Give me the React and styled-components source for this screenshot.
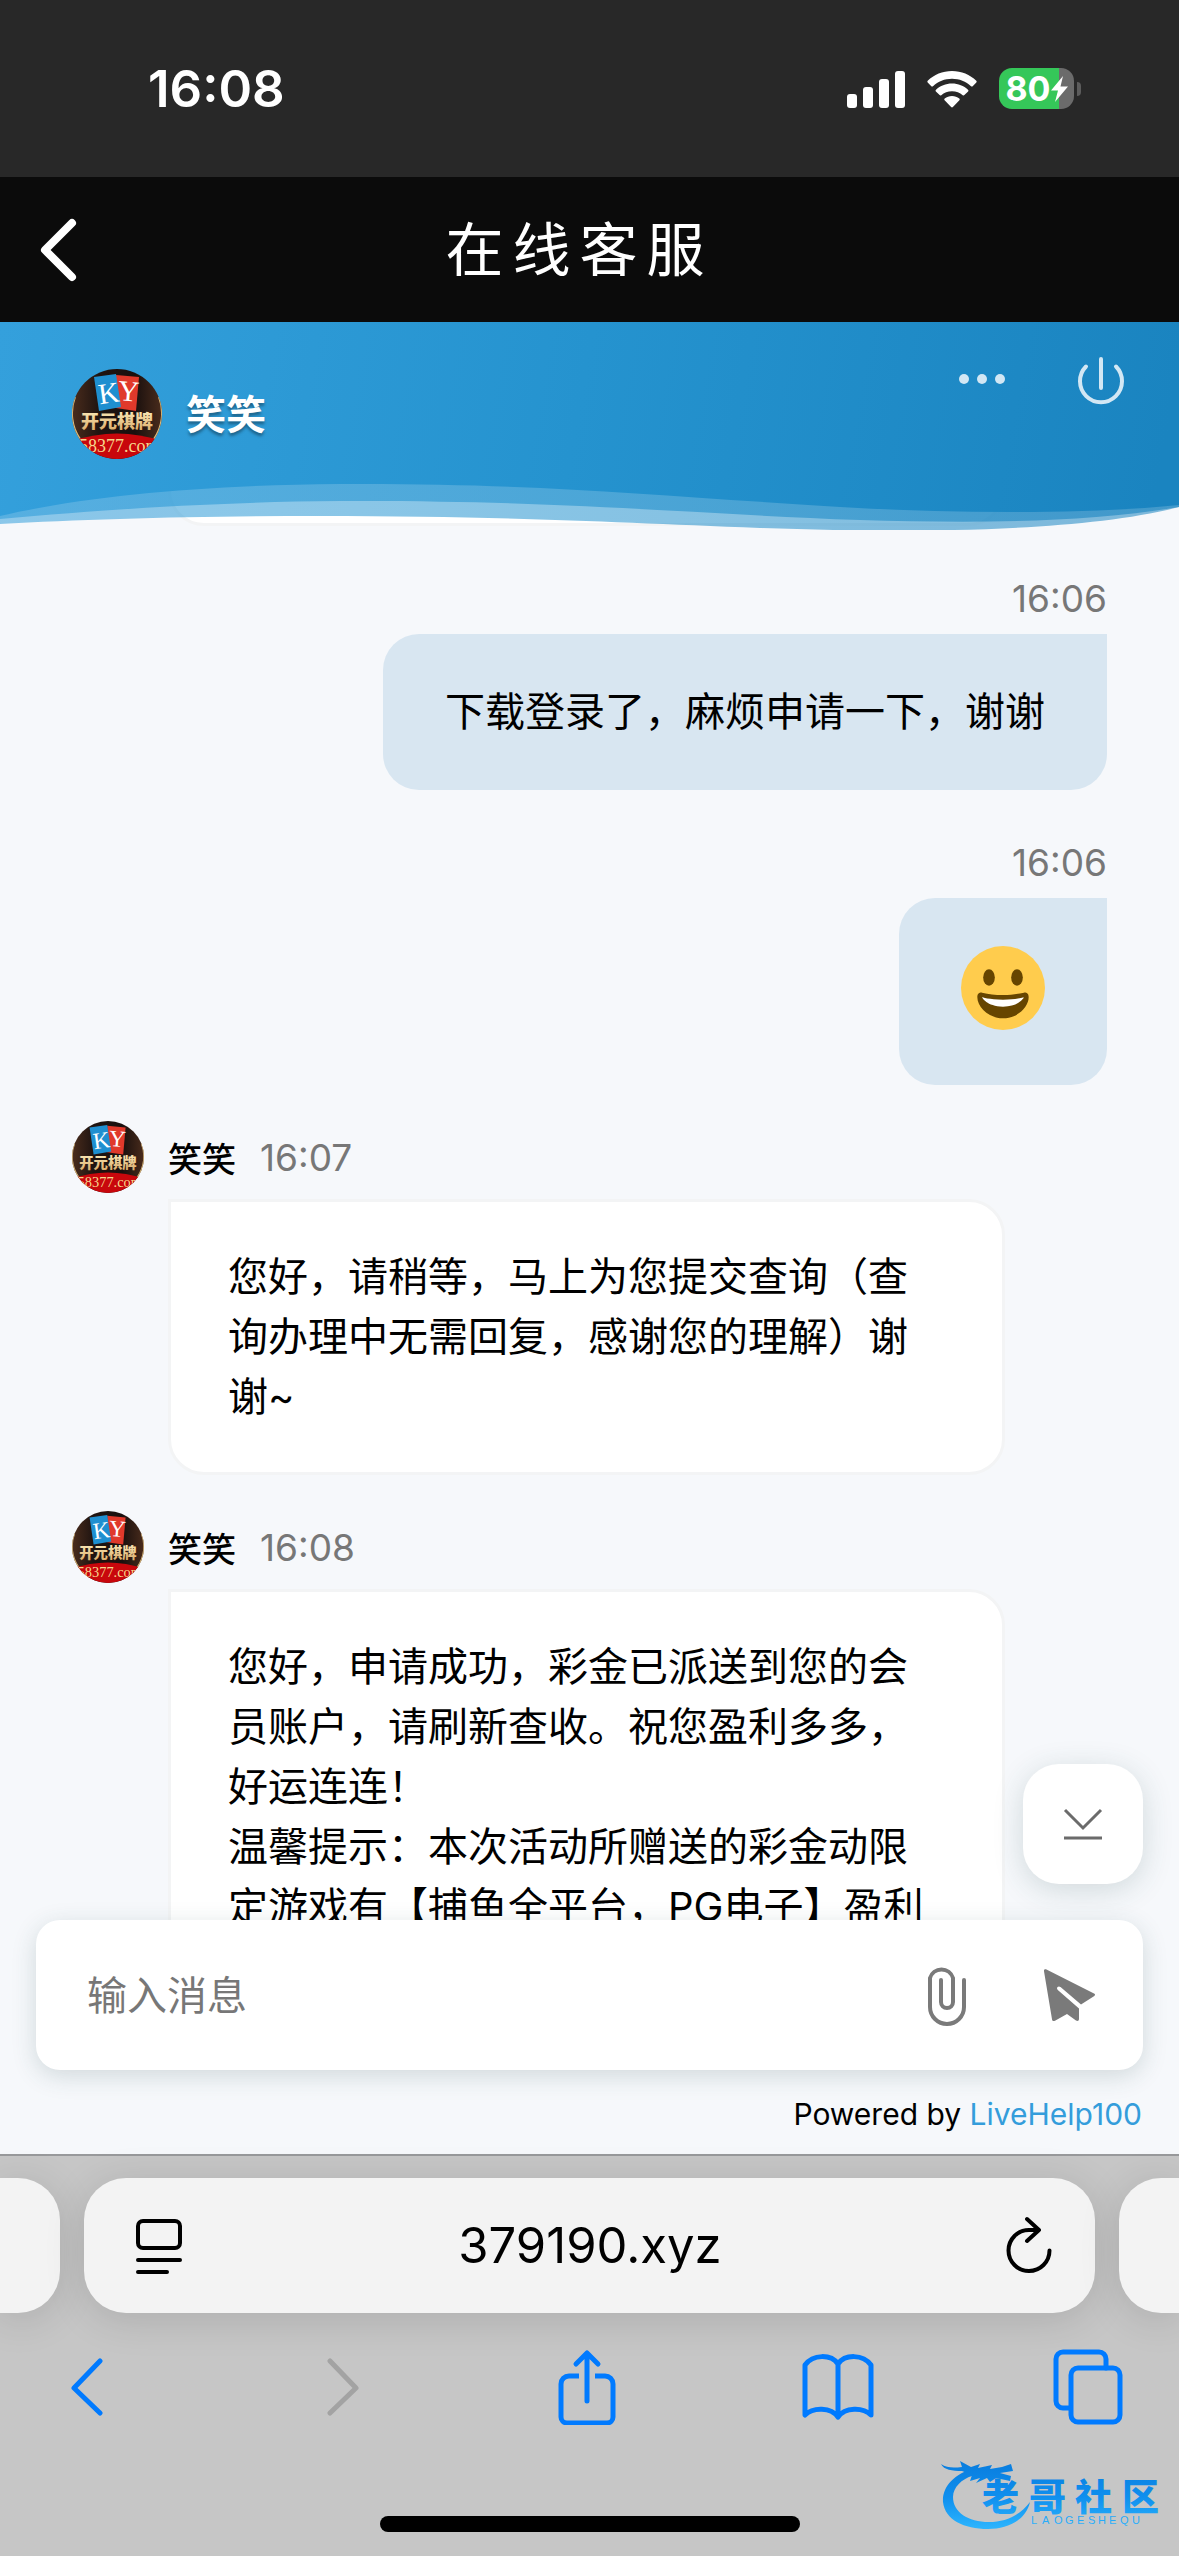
import React from "react";
import styled, { createGlobalStyle } from "styled-components";

const GlobalStyle = createGlobalStyle`
  * {
    box-sizing: border-box;
  }
  body {
    margin: 0;
    font-family: Inter, "Noto Sans CJK SC", sans-serif;
    color: #000;
  }
  button {
    display: flex;
    align-items: center;
    justify-content: center;
    padding: 0;
    border: 0;
    background: none;
    cursor: pointer;
  }
  svg {
    display: block;
    flex: none;
  }
`;

const history = [
  { id: 1, mine: true, time: "16:06", text: "下载登录了，麻烦申请一下，谢谢" },
  { id: 2, mine: true, time: "16:06", emoji: true },
  {
    id: 3,
    name: "笑笑",
    time: "16:07",
    text: "您好，请稍等，马上为您提交查询（查\n询办理中无需回复，感谢您的理解）谢\n谢~",
  },
  {
    id: 4,
    name: "笑笑",
    time: "16:08",
    text: "您好，申请成功，彩金已派送到您的会\n员账户，请刷新查收。祝您盈利多多，\n好运连连！\n温馨提示：本次活动所赠送的彩金动限\n定游戏有【捕鱼全平台，PG电子】盈利",
  },
];

const Avatar = ({ size }) => (
  <svg width={size} height={size} viewBox="0 0 90 90" role="img" aria-label="开元棋牌">
    <defs>
      <clipPath id={`face${size}`}>
        <circle cx="45" cy="45" r="45" />
      </clipPath>
      <linearGradient id={`gold${size}`} x1="0" y1="0" x2="0" y2="1">
        <stop offset="0" stopColor="#fff3c4" />
        <stop offset="1" stopColor="#d9a763" />
      </linearGradient>
      <linearGradient id={`wood${size}`} x1="0" y1="0" x2="1" y2="0">
        <stop offset="0" stopColor="#4a2c1c" />
        <stop offset="0.3" stopColor="#1f1411" />
        <stop offset="0.7" stopColor="#1a100e" />
        <stop offset="1" stopColor="#4a2c1c" />
      </linearGradient>
    </defs>
    <g clipPath={`url(#face${size})`}>
      <rect width="90" height="90" fill={`url(#wood${size})`} />
      <path d="M3 28A45 45 0 0 0 8 70M87 28A45 45 0 0 1 82 70" fill="none" stroke="#d8b778" strokeWidth="2" />
      <path d="M44 6l23 2-3 34-20-3z" fill="#e0392b" />
      <path d="M22 8l22-3 5 33-22 4z" fill="#1f8fd0" />
      <g fill="#fff" fontFamily="Liberation Serif, serif" fontSize="29">
        <text x="26" y="34" transform="rotate(-8 36 22)">K</text>
        <text x="46" y="32" transform="rotate(5 56 22)">Y</text>
      </g>
      <path d="M0 72q45-15 90 0v18H0z" fill="#c8070c" />
      <text
        x="9"
        y="59"
        fill={`url(#gold${size})`}
        fontFamily="Noto Sans CJK SC, sans-serif"
        fontSize="18"
        fontWeight="900"
      >
        开元棋牌
      </text>
      <text x="7" y="83" fill="#f6d68c" fontFamily="Liberation Serif, serif" fontSize="18">
        58377.com
      </text>
    </g>
  </svg>
);

const Waves = () => (
  <WaveArt viewBox="0 0 1179 208" preserveAspectRatio="none" aria-hidden="true">
    <defs>
      <linearGradient id="sea" gradientUnits="userSpaceOnUse" x1="0" y1="0" x2="1150" y2="208">
        <stop offset="0" stopColor="#34a0dc" />
        <stop offset="0.5" stopColor="#2593cf" />
        <stop offset="1" stopColor="#1a84c0" />
      </linearGradient>
    </defs>
    <path
      d="M0 0H1179V185C1080 211 900 211 760 206C610 200 500 194 320 194C200 194 90 197 0 202Z"
      fill="url(#sea)"
      opacity="0.55"
    />
    <path
      d="M0 0H1179V185C1080 202 960 201 860 198C690 192 560 178 340 179C210 180 100 188 0 197Z"
      fill="url(#sea)"
      opacity="0.6"
    />
    <path
      d="M0 0H1179V183C1090 192 960 192 840 185C660 174 540 161 340 162C210 163 90 173 0 194Z"
      fill="url(#sea)"
    />
  </WaveArt>
);

const Emoji = () => (
  <svg width="84" height="84" viewBox="0 0 36 36" role="img" aria-label="笑脸">
    <circle cx="18" cy="18" r="18" fill="#ffcc4d" />
    <path
      d="M18 21c-3.6 0-6-.4-9-1-.7-.1-2 0-2 2 0 4 4.600 9 11 9s11-5 11-9c0-2-1.300-2.100-2-2-3 .6-5.400 1-9 1z"
      fill="#664500"
    />
    <path d="M9 22s3 1 9 1 9-1 9-1-2 4-9 4-9-4-9-4z" fill="#fff" />
    <ellipse cx="12" cy="13.500" rx="2.500" ry="3.500" fill="#664500" />
    <ellipse cx="24" cy="13.500" rx="2.500" ry="3.500" fill="#664500" />
  </svg>
);

const StatusIcons = () => (
  <StatusGroup>
    <svg width="58" height="38" viewBox="0 0 58 38" fill="#fff">
      <rect x="0" y="24" width="10" height="14" rx="3" />
      <rect x="16" y="17" width="10" height="21" rx="3" />
      <rect x="32" y="9" width="10" height="29" rx="3" />
      <rect x="48" y="1" width="10" height="37" rx="3" />
    </svg>
    <svg width="50" height="38" viewBox="0 0 50 38" fill="#fff">
      <path d="M25 1c9.500 0 18 3.600 24.300 9.800.5.500.5 1.200 0 1.700l-3.600 3.700c-.5.500-1.200.5-1.700 0C39 11.500 32.300 8.800 25 8.800S11 11.500 6 16.200c-.5.500-1.200.5-1.700 0L.7 12.500c-.5-.5-.5-1.200 0-1.700C7 4.600 15.500 1 25 1z" />
      <path d="M25 13.500c6.200 0 11.800 2.300 16 6.200.6.500.6 1.200.1 1.700l-3.700 3.700c-.5.500-1.200.5-1.700.1-2.800-2.500-6.500-4-10.700-4s-7.900 1.500-10.700 4c-.5.400-1.200.4-1.700-.1l-3.700-3.700c-.5-.5-.5-1.200.1-1.700 4.200-3.900 9.800-6.200 16-6.200z" />
      <path d="M25 26c2.800 0 5.300 1 7.300 2.600.6.500.6 1.200.1 1.700l-6.500 6.800c-.5.500-1.300.5-1.800 0l-6.500-6.800c-.5-.5-.5-1.200.1-1.700C19.700 27 22.200 26 25 26z" />
    </svg>
    <Battery>
      <BatteryBody>
        80
        <svg width="17" height="26" viewBox="0 0 17 26" fill="#fff">
          <path d="M12 0L0 14.500h7L4 26 17 10.500H9.500z" />
        </svg>
      </BatteryBody>
      <BatteryNub />
    </Battery>
  </StatusGroup>
);

const Brand = () => (
  <BrandArt width="226" height="76" viewBox="0 0 226 76" role="img" aria-label="老哥社区">
    <defs>
      <linearGradient id="brand" gradientUnits="userSpaceOnUse" x1="0" y1="8" x2="0" y2="70">
        <stop offset="0" stopColor="#0a7fe0" />
        <stop offset="0.5" stopColor="#0f8fee" />
        <stop offset="1" stopColor="#2cb4fd" />
      </linearGradient>
    </defs>
    <g fill="url(#brand)">
      <path d="M34 10C14 16 2 29 3 44C5 62 24 71 48 71C68 71 86 62 90 44C80 57 66 64 49 64C28 64 13 54 13 39C13 29 22 21 32 18Z" />
      <path d="M1 6C7 10 13 10 22 9L20 3L31 9L40 6L38 10L52 7L50 11L62 9L71 6L73 13L60 15L71 18L70 23L56 20L50 24L47 20L36 25L40 20L30 23L32 17L22 13C12 13 4 12 1 6Z" />
      <text x="42 89 135 182" y="53" fontSize="37" fontWeight="900" fontFamily="Noto Sans CJK SC, sans-serif">
        老哥社区
      </text>
      <text
        x="91 102 114 125 137 148 158 169 180 192"
        y="66"
        fontSize="11"
        fontFamily="Liberation Sans, sans-serif"
      >
        LAOGESHEQU
      </text>
    </g>
  </BrandArt>
);

const Message = ({ mine, name, time, text, emoji }) => (
  <Row $mine={mine}>
    <Meta $mine={mine}>
      {!mine && <Avatar size={72} />}
      {name && <Sender>{name}</Sender>}
      <Time>{time}</Time>
    </Meta>
    <Bubble $mine={mine}>{emoji ? <EmojiBox><Emoji /></EmojiBox> : text}</Bubble>
  </Row>
);

const App = () => {
  return (
    <Screen>
      <GlobalStyle />
      <StatusBar>
        <Clock>16:08</Clock>
        <StatusIcons />
      </StatusBar>
      <NavBar>
        <BackButton aria-label="返回">
          <svg width="38" height="64" viewBox="0 0 38 64" fill="none" stroke="#fff" strokeWidth="8">
            <path d="M33 5L6 32l27 27" strokeLinecap="round" strokeLinejoin="round" />
          </svg>
        </BackButton>
        <NavTitle>在线客服</NavTitle>
      </NavBar>

      <Chat>
        <AgentHeader>
          <Waves />
          <Agent>
            <Avatar size={90} />
            <AgentName>笑笑</AgentName>
          </Agent>
          <HeaderActions>
            <MoreButton aria-label="更多">
              <svg width="46" height="10" viewBox="0 0 46 10" fill="#d2e7f4">
                <circle cx="5" cy="5" r="5" />
                <circle cx="23" cy="5" r="5" />
                <circle cx="41" cy="5" r="5" />
              </svg>
            </MoreButton>
            <button aria-label="结束对话">
              <svg width="48" height="52" viewBox="0 0 48 52" fill="none" stroke="#d2e7f4" strokeWidth="4" strokeLinecap="round">
                <path d="M24 3v29M9 10.500a21 21 0 1 0 30 0" />
              </svg>
            </button>
          </HeaderActions>
        </AgentHeader>

        <List>
          <Row>
            <Bubble />
          </Row>
          {history.map((item) => (
            <Message key={item.id} {...item} />
          ))}
        </List>

        <Composer>
          <ScrollDown aria-label="滚动到底部">
            <svg width="40" height="34" viewBox="0 0 40 34" fill="none" stroke="#6b6b6b" strokeWidth="3">
              <path d="M2 3l18 18L38 3M1 31h38" />
            </svg>
          </ScrollDown>
          <Field aria-label="输入消息" placeholder="输入消息" />
          <button type="button" aria-label="附件">
            <svg width="40" height="62" viewBox="0 0 40 62" fill="none" stroke="#7a7a7a" strokeWidth="4" strokeLinecap="round">
              <path d="M37 16v27a17 17 0 0 1-34 0V14a12 12 0 0 1 23 0v24a6 6 0 0 1-12 0V16" />
            </svg>
          </button>
          <button aria-label="发送">
            <svg width="53" height="53" viewBox="0 0 53 53" fill="#7a7a7a">
              <path d="M3 .3l48 24.200c1.300.7 1.300 1.700.3 2.500L38 35.500 17.500 18c-2.300-1.800-4.800 1-2.700 3L36 39.500V50c0 2-1.500 2.500-3 1.500L24 45 12 51.700c-1.500.8-2.700.3-2.900-1L1 2.300C.8.600 1.600-.2 3 .3z" />
            </svg>
          </button>
        </Composer>
        <Powered>
          Powered by <a href="#livehelp">LiveHelp100</a>
        </Powered>
      </Chat>

      <Browser>
        <Tabs>
          <SideTab $side="left" />
          <AddressBar>
            <button aria-label="页面菜单">
              <svg width="46" height="56" viewBox="0 0 46 56" fill="none" stroke="#000" strokeWidth="4" strokeLinecap="round">
                <rect x="2" y="3" width="42" height="27" rx="5" />
                <path d="M2 42h42M2 54h29" />
              </svg>
            </button>
            <Domain>379190.xyz</Domain>
            <button aria-label="刷新">
              <svg width="46" height="60" viewBox="0 0 46 60" fill="none" stroke="#000" strokeWidth="4" strokeLinecap="round" strokeLinejoin="round">
                <path d="M21 3l12 11-12 11M32 14H23A20.500 20.500 0 1 0 43.500 34.500" />
              </svg>
            </button>
          </AddressBar>
          <SideTab $side="right" />
        </Tabs>
        <Toolbar>
          <ToolButton aria-label="后退">
            <svg width="34" height="58" viewBox="0 0 34 58">
              <path d="M31 3L5 30l26 25" />
            </svg>
          </ToolButton>
          <ToolButton aria-label="前进" disabled>
            <svg width="48" height="58" viewBox="-14 0 48 58">
              <path d="M3 3l26 27L3 55" />
            </svg>
          </ToolButton>
          <ToolButton aria-label="分享">
            <svg width="58" height="76" viewBox="0 0 58 76">
              <path d="M21 27H11a8 8 0 0 0-8 8v33a6 6 0 0 0 6 6h40a6 6 0 0 0 6-6V35a8 8 0 0 0-8-8H37" strokeLinecap="butt" />
              <path d="M29 52V4M18 15L29 4l11 11" />
            </svg>
          </ToolButton>
          <ToolButton aria-label="书签">
            <svg width="72" height="68" viewBox="0 0 72 68">
              <path d="M36 64C29 54 11 54 3 62V12C11 1 29 1 36 11C43 1 61 1 69 12V62C61 54 43 54 36 64V11" />
            </svg>
          </ToolButton>
          <ToolButton aria-label="标签页">
            <svg width="70" height="76" viewBox="0 0 70 76">
              <path d="M17 59H10a7 7 0 0 1-7-7V10a7 7 0 0 1 7-7h36a7 7 0 0 1 7 7v9" />
              <rect x="18" y="19" width="49" height="54" rx="7" />
            </svg>
          </ToolButton>
        </Toolbar>
        <HomeIndicator />
        <Brand />
      </Browser>
    </Screen>
  );
};

const Screen = styled.div`
  display: flex;
  flex-direction: column;
  height: 100vh;
  overflow: hidden;
`;

const StatusBar = styled.div`
  flex: none;
  display: flex;
  align-items: center;
  justify-content: space-between;
  height: 177px;
  padding: 0 98px 0 148px;
  background: #282828;
  color: #fff;
`;

const Clock = styled.span`
  font-size: 51px;
  font-weight: 600;
`;

const StatusGroup = styled.div`
  display: flex;
  align-items: center;
  gap: 22px;
`;

const Battery = styled.div`
  display: flex;
  align-items: center;
  gap: 3px;
`;

const BatteryBody = styled.div`
  display: flex;
  align-items: center;
  justify-content: center;
  width: 75px;
  height: 41px;
  border-radius: 13px;
  background: linear-gradient(90deg, #35c759 80%, #6b6b6b 80%);
  font-size: 34px;
  font-weight: 700;
`;

const BatteryNub = styled.div`
  width: 4px;
  height: 14px;
  border-radius: 0 4px 4px 0;
  background: #5c5c5c;
`;

const NavBar = styled.header`
  flex: none;
  display: grid;
  grid-template-columns: 120px 1fr 120px;
  align-items: center;
  height: 145px;
  background: #0b0b0b;
  color: #fff;
`;

const BackButton = styled.button`
  width: 116px;
  height: 100%;
`;

const NavTitle = styled.h1`
  margin: 0;
  padding: 0 20px 8px 0;
  font-size: 58px;
  font-weight: 400;
  letter-spacing: 9px;
  text-align: center;
`;

const Chat = styled.main`
  flex: 1;
  display: flex;
  flex-direction: column;
  min-height: 0;
  background: #f6f8fb;
`;

const AgentHeader = styled.section`
  position: relative;
  z-index: 1;
  flex: none;
  display: flex;
  align-items: flex-start;
  justify-content: space-between;
  height: 208px;
  padding: 34px 54px 0 72px;
`;

const WaveArt = styled.svg`
  position: absolute;
  inset: 0;
  width: 100%;
  height: 100%;
`;

const Agent = styled.div`
  position: relative;
  display: flex;
  align-items: center;
  gap: 24px;
  padding-top: 13px;
`;

const AgentName = styled.h2`
  margin: 0;
  padding-bottom: 4px;
  color: #fff;
  font-size: 40px;
  font-weight: 700;
  text-shadow: 0 3px 3px rgba(0, 0, 0, 0.35);
`;

const HeaderActions = styled.div`
  position: relative;
  display: flex;
  gap: 72px;
`;

const MoreButton = styled.button`
  height: 46px;
`;

const List = styled.div`
  flex: 1;
  display: flex;
  flex-direction: column;
  gap: 36px;
  min-height: 0;
  margin-top: -100px;
  padding: 0 72px;
  overflow: hidden;
`;

const Row = styled.article`
  flex: none;
  display: flex;
  flex-direction: column;
  align-items: ${({ $mine }) => ($mine ? "flex-end" : "stretch")};
  padding: ${({ $mine }) => ($mine ? "0" : "0 102px 0 0")};
`;

const Meta = styled.div`
  display: flex;
  align-items: center;
  gap: 24px;
  height: 72px;
  margin-bottom: ${({ $mine }) => ($mine ? "0" : "6px")};
`;

const Sender = styled.strong`
  font-size: 34px;
  font-weight: 500;
`;

const Time = styled.time`
  color: #777;
  font-size: 37px;
`;

const Bubble = styled.div`
  margin-left: ${({ $mine }) => ($mine ? "0" : "96px")};
  padding: ${({ $mine }) => ($mine ? "48px 62px" : "45px 57px")};
  border: ${({ $mine }) => ($mine ? "0" : "3px solid #f3f4f5")};
  border-radius: ${({ $mine }) => ($mine ? "36px 0 36px 36px" : "0 36px 36px 36px")};
  background: ${({ $mine }) => ($mine ? "#d8e6f1" : "#fff")};
  font-size: 40px;
  line-height: 60px;
  white-space: pre;
`;

const EmojiBox = styled.div`
  padding-bottom: 7px;
`;

const Composer = styled.form`
  position: relative;
  flex: none;
  display: flex;
  align-items: center;
  gap: 76px;
  height: 150px;
  margin: 0 36px;
  padding: 0 47px 0 51px;
  border-radius: 24px;
  background: #fff;
  box-shadow: 0 6px 24px rgba(40, 80, 80, 0.18);
`;

const ScrollDown = styled.button.attrs({ type: "button" })`
  position: absolute;
  right: 0;
  bottom: calc(100% + 36px);
  width: 120px;
  height: 120px;
  && {
    border-radius: 36px;
    background: #fff;
    box-shadow: 0 6px 30px rgba(40, 80, 80, 0.18);
  }
`;

const Field = styled.input`
  flex: 1;
  min-width: 0;
  height: 90px;
  padding: 0;
  border: 0;
  outline: 0;
  background: transparent;
  font: inherit;
  font-size: 40px;
  &::placeholder {
    color: #777;
    opacity: 1;
  }
`;

const Powered = styled.p`
  flex: none;
  height: 84px;
  margin: 0;
  padding: 22px 37px 0;
  font-size: 30px;
  line-height: 44px;
  text-align: right;
  a {
    color: #349ddb;
    text-decoration: none;
  }
`;

const Browser = styled.footer`
  position: relative;
  flex: none;
  display: flex;
  flex-direction: column;
  height: 402px;
  padding-top: 22px;
  border-top: 2px solid #98999b;
  background: #c6c6c6;
`;

const Tabs = styled.div`
  display: flex;
  gap: 24px;
  height: 135px;
`;

const SideTab = styled.div`
  width: 60px;
  border-radius: ${({ $side }) => ($side === "left" ? "0 42px 42px 0" : "42px 0 0 42px")};
  background: #f3f3f3;
  box-shadow: 0 6px 40px rgba(0, 0, 0, 0.13);
`;

const AddressBar = styled.div`
  flex: 1;
  display: flex;
  align-items: center;
  padding: 0 43px 0 52px;
  border-radius: 42px;
  background: #f3f3f3;
  box-shadow: 0 6px 40px rgba(0, 0, 0, 0.13);
`;

const Domain = styled.span`
  flex: 1;
  padding-right: 8px;
  font-size: 49px;
  text-align: center;
`;

const Toolbar = styled.nav`
  display: flex;
  justify-content: space-between;
  height: 148px;
  padding: 0 55px 0 50px;
`;

const ToolButton = styled.button`
  width: 72px;
  svg {
    fill: none;
    stroke: ${({ disabled }) => (disabled ? "#a3a3a3" : "#007aff")};
    stroke-width: 5;
    stroke-linecap: round;
    stroke-linejoin: round;
  }
`;

const HomeIndicator = styled.div`
  width: 420px;
  height: 16px;
  margin: auto auto 24px;
  border-radius: 8px;
  background: #000;
`;

const BrandArt = styled.svg`
  position: absolute;
  right: 13px;
  bottom: 22px;
`;

export default App;
